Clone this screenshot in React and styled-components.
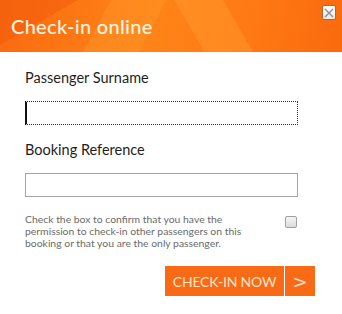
import React from "react";
import styled, { createGlobalStyle } from "styled-components";

const GlobalStyle = createGlobalStyle`
  html, body {
    margin: 0;
    padding: 0;
    background: #ffffff;
  }
  body {
    font-family: Lato, "Open Sans", sans-serif;
  }
`;

const App = () => {
  return (
    <>
      <GlobalStyle />
      <Dialog>
        <Header>
          <Title>Check-in online</Title>
          <CloseButton aria-label="close">
            <svg width="10" height="10" viewBox="0 0 10 10">
              <path d="M1 1 L9 9 M9 1 L1 9" stroke="#8a8f99" strokeWidth="1.4" />
            </svg>
          </CloseButton>
        </Header>
        <Form>
          <Label>Passenger Surname</Label>
          <Input focused />
          <Label>Booking Reference</Label>
          <Input />
          <ConfirmRow>
            <ConfirmText>
              Check the box to confirm that you have the permission to check-in
              other passengers on this booking or that you are the only passenger.
            </ConfirmText>
            <Checkbox type="checkbox" />
          </ConfirmRow>
          <Actions>
            <SubmitButton>CHECK-IN NOW</SubmitButton>
            <ArrowButton>&gt;</ArrowButton>
          </Actions>
        </Form>
      </Dialog>
    </>
  );
};

const Dialog = styled.div`
  width: 342px;
  height: 314px;
  background: #ffffff;
  display: flex;
  flex-direction: column;
  overflow: hidden;
`;

const Header = styled.div`
  height: 52px;
  position: relative;
  display: flex;
  align-items: center;
  padding-left: 11px;
  background:
    linear-gradient(118deg, transparent 0 30%, rgba(255, 150, 40, 0.45) 30% 45%, transparent 45%),
    linear-gradient(60deg, transparent 0 55%, rgba(255, 160, 50, 0.4) 55% 68%, transparent 68%),
    linear-gradient(150deg, rgba(240, 90, 10, 0.5) 0 18%, transparent 18%),
    linear-gradient(100deg, #fb6a10 0%, #ff8418 45%, #ff7a14 70%, #fa6a0e 100%);
`;

const Title = styled.h1`
  margin: 0;
  font-family: Lato, "Open Sans", sans-serif;
  font-size: 20px;
  font-weight: 500;
  color: #fff4e0;
  letter-spacing: 0.3px;
`;

const CloseButton = styled.div`
  position: absolute;
  top: 5px;
  right: 6px;
  width: 14px;
  height: 15px;
  box-sizing: border-box;
  background: linear-gradient(#ffffff, #e6e8ec);
  border: 1px solid #b9652a;
  border-radius: 2px;
  display: flex;
  align-items: center;
  justify-content: center;
`;

const Form = styled.div`
  display: flex;
  flex-direction: column;
  padding: 17px 0 0 25px;
  width: 290px;
`;

const Label = styled.div`
  font-family: Lato, "Open Sans", sans-serif;
  font-size: 14.5px;
  color: #1e1e1e;
  line-height: 18px;
  margin-bottom: 14px;
`;

const Input = styled.div`
  width: 273px;
  height: 24px;
  box-sizing: border-box;
  background: #ffffff;
  border: 1px ${(p) => (p.focused ? "dotted #2a2a40" : "solid #a5a5a5")};
  border-left: ${(p) => (p.focused ? "2px solid #111" : "1px solid #a5a5a5")};
  margin-bottom: 16px;
`;

const ConfirmRow = styled.div`
  display: flex;
  align-items: flex-start;
  justify-content: space-between;
  width: 273px;
  margin-top: 0;
`;

const ConfirmText = styled.p`
  margin: 0;
  width: 240px;
  font-family: Lato, "Open Sans", sans-serif;
  font-size: 10.4px;
  line-height: 12px;
  color: #6a6a6a;
`;

const Checkbox = styled.input`
  appearance: none;
  width: 12px;
  height: 12px;
  margin: 3px 1px 0 0;
  box-sizing: border-box;
  border: 1px solid #a0a0a0;
  border-radius: 2px;
  background: linear-gradient(#f4f4f4, #dcdcdc);
`;

const Actions = styled.div`
  display: flex;
  justify-content: flex-end;
  width: 290px;
  margin-top: 17px;
  gap: 1px;
`;

const SubmitButton = styled.div`
  width: 119px;
  height: 30px;
  background: #f96a16;
  color: #ffe6c8;
  font-family: Lato, "Open Sans", sans-serif;
  font-size: 14px;
  letter-spacing: -0.2px;
  display: flex;
  align-items: center;
  justify-content: center;
`;

const ArrowButton = styled.div`
  width: 30px;
  height: 30px;
  background: #f96a16;
  color: #ffe6c8;
  font-family: "DejaVu Sans", sans-serif;
  font-size: 18px;
  display: flex;
  align-items: center;
  justify-content: center;
`;

export default App;
